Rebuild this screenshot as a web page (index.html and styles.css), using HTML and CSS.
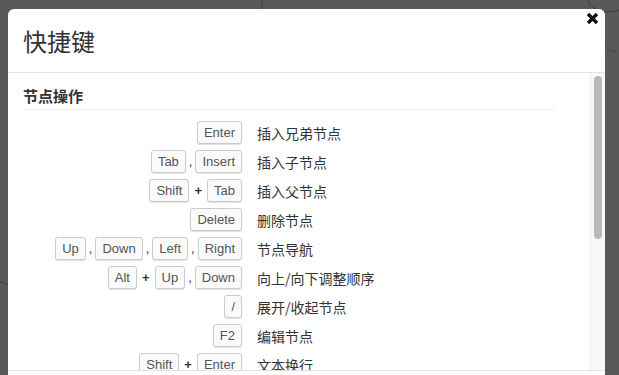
FILE: index.html
```html
<!DOCTYPE html>
<html lang="zh-CN">
<head>
    <meta charset="UTF-8">
    <meta name="viewport" content="width=device-width, initial-scale=1.0">
    <title>快捷键</title>
    <link rel="stylesheet" href="styles.css">
</head>
<body>
    <svg class="canvas-lines" width="619" height="375" viewBox="0 0 619 375">
        <path d="M262 0 L262 9" />
        <path d="M588 0 C589 4 592 8 598 10 C606 12 612 12 619 10" />
        <path d="M607 48 C610 50 612 52 616 51" />
        <path d="M0 282 C3 283 6 284 8 285" />
    </svg>

    <div class="modal">
        <div class="modal-header">
            <h3 class="modal-title">快捷键</h3>
            <button class="close" title="关闭">
                <svg width="13" height="13" viewBox="0 0 13 13">
                    <path d="M2 2 L11 11 M11 2 L2 11" />
                </svg>
            </button>
        </div>

        <div class="modal-body">
            <div class="body-content">
                <h4 class="group-title">节点操作</h4>
                <table class="hotkeys">
                    <tr><td class="keys"><kbd>Enter</kbd></td><td>插入兄弟节点</td></tr>
                    <tr><td class="keys"><kbd>Tab</kbd><span class="comma">,</span><kbd>Insert</kbd></td><td>插入子节点</td></tr>
                    <tr><td class="keys"><kbd>Shift</kbd><span class="plus">+</span><kbd>Tab</kbd></td><td>插入父节点</td></tr>
                    <tr><td class="keys"><kbd>Delete</kbd></td><td>删除节点</td></tr>
                    <tr><td class="keys"><kbd>Up</kbd><span class="comma">,</span><kbd>Down</kbd><span class="comma">,</span><kbd>Left</kbd><span class="comma">,</span><kbd>Right</kbd></td><td>节点导航</td></tr>
                    <tr><td class="keys"><kbd>Alt</kbd><span class="plus">+</span><kbd>Up</kbd><span class="comma">,</span><kbd>Down</kbd></td><td>向上/向下调整顺序</td></tr>
                    <tr><td class="keys"><kbd>/</kbd></td><td>展开/收起节点</td></tr>
                    <tr><td class="keys"><kbd>F2</kbd></td><td>编辑节点</td></tr>
                    <tr><td class="keys"><kbd>Shift</kbd><span class="plus">+</span><kbd>Enter</kbd></td><td>文本换行</td></tr>
                </table>
            </div>
            <div class="scrollbar">
                <div class="scroll-thumb"></div>
            </div>
        </div>

        <div class="modal-footer"></div>
    </div>
</body>
</html>
```

FILE: styles.css
```css
html, body {
    height: 100%;
}
body {
    margin: 0;
    overflow: hidden;
    background-color: #595959;
    font-family: "Liberation Sans", "Noto Sans CJK SC", sans-serif;
    color: #333;
    position: relative;
}
.canvas-lines {
    position: absolute;
    top: 0;
    left: 0;
}
.canvas-lines path {
    fill: none;
    stroke: #3f3f3f;
    stroke-width: 1;
}
.modal {
    position: relative;
    margin: 9px 0 0 8px;
    width: 597px;
    background-color: #fff;
    border-radius: 6px;
}
.modal-header {
    display: flex;
    justify-content: space-between;
    align-items: center;
    height: 63px;
    padding: 0 6px 0 15px;
    border-bottom: 1px solid #e3e3e3;
}
.modal-title {
    margin: 0;
    font-family: "Noto Sans CJK SC", sans-serif;
    font-size: 24px;
    font-weight: 400;
    line-height: 30px;
    color: #333;
}
.close {
    align-self: flex-start;
    margin-top: 3px;
    padding: 0;
    border: 0;
    background: none;
    cursor: pointer;
}
.close svg {
    display: block;
}
.close path {
    stroke: #111;
    stroke-width: 3.4;
    fill: none;
}
.modal-body {
    display: flex;
    height: 297px;
}
.body-content {
    flex: 1;
    overflow: hidden;
    padding: 0 35px 0 15px;
}
.scrollbar {
    width: 14px;
    background-color: #f8f8f8;
    border-left: 1px solid #ececec;
}
.scroll-thumb {
    height: 163px;
    margin: 3px 3px 0 3px;
    border-radius: 4px;
    background-color: #b9b9b9;
}
.group-title {
    margin: 12px 0 8px;
    padding-bottom: 2px;
    border-bottom: 1px solid #eee;
    font-family: "Noto Sans CJK SC", sans-serif;
    font-size: 15px;
    font-weight: 700;
    line-height: 22px;
}
.hotkeys {
    border-collapse: collapse;
    font-family: "Noto Sans CJK SC", sans-serif;
    font-size: 14px;
}
.hotkeys td {
    height: 29px;
    padding: 0;
    white-space: nowrap;
}
.hotkeys .keys {
    width: 219px;
    padding-right: 15px;
    text-align: right;
}
kbd {
    display: inline-block;
    height: 21px;
    padding: 0 6px;
    border: 1px solid #ccc;
    border-radius: 3px;
    background-color: #fafafa;
    box-shadow: 0 1px 1px rgba(0, 0, 0, 0.12);
    font-family: "Liberation Sans", sans-serif;
    font-size: 13px;
    line-height: 21px;
    color: #555;
    vertical-align: middle;
}
.comma {
    margin: 0 3px;
    font-family: "Liberation Sans", sans-serif;
    font-size: 13px;
    vertical-align: middle;
}
.plus {
    margin: 0 5px;
    font-family: "Liberation Sans", sans-serif;
    font-size: 13px;
    font-weight: 700;
    vertical-align: middle;
}
.modal-footer {
    height: 60px;
    border-top: 1px solid #e3e3e3;
}
```
